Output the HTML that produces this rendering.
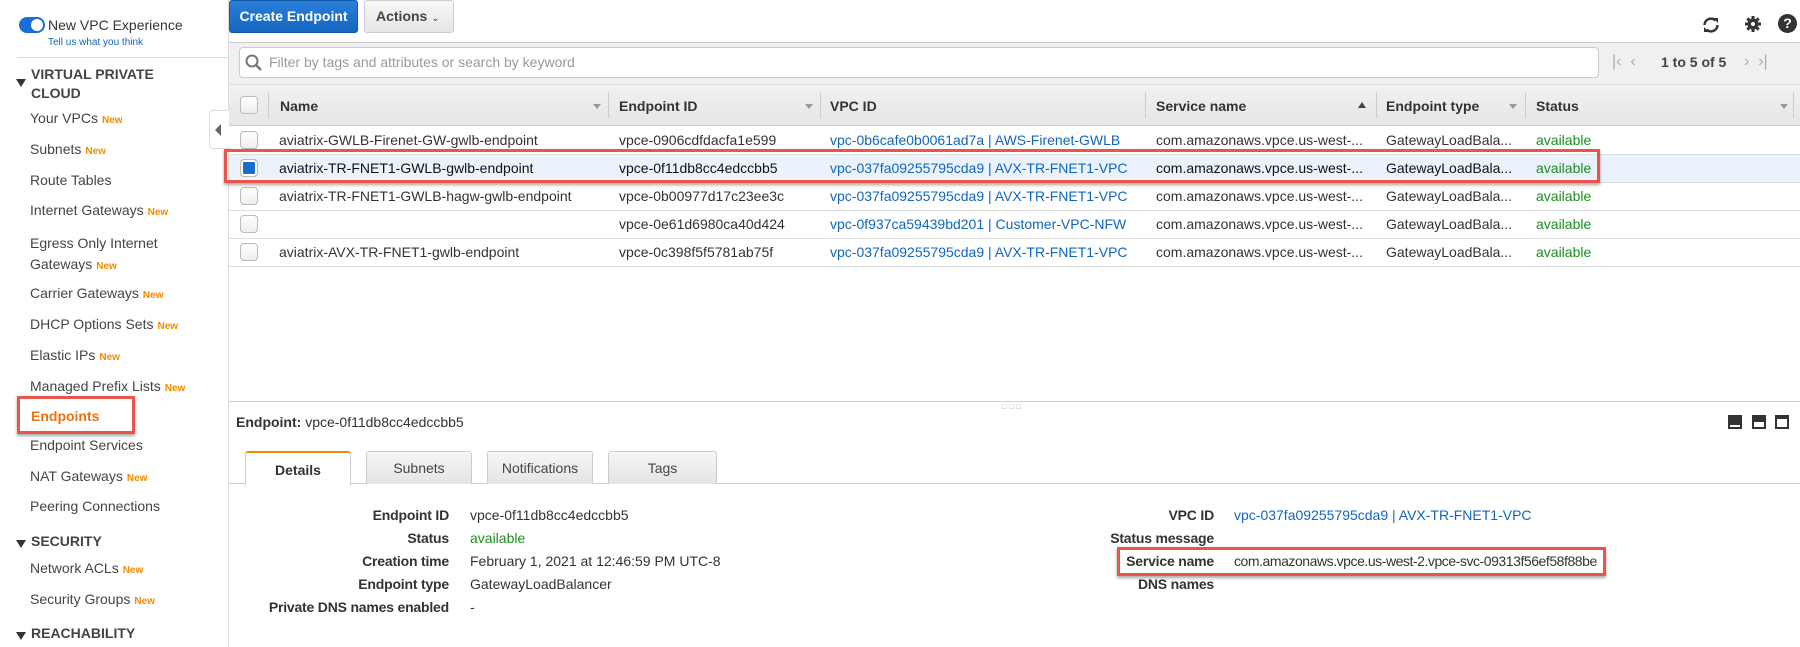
<!DOCTYPE html>
<html><head><meta charset="utf-8"><style>
*{box-sizing:border-box;margin:0;padding:0}
body{width:1800px;height:647px;overflow:hidden;background:#fff;font-family:"Liberation Sans",Arial,sans-serif;font-size:14px;color:#333;position:relative}
.a{position:absolute;white-space:nowrap}
.new{color:#f08c00;font-size:10px;font-weight:bold;margin-left:4px}
.side{color:#444;font-size:14px}
.sec{font-weight:bold;color:#444;font-size:14px}
.tri{display:inline-block;width:0;height:0;border-left:5px solid transparent;border-right:5px solid transparent;border-top:8px solid #333}
.th{font-weight:bold;color:#333;font-size:14px}
.dv{position:absolute;top:92px;width:1px;height:26px;background:#ccc}
.dd{position:absolute;top:104px;width:0;height:0;border-left:4px solid transparent;border-right:4px solid transparent;border-top:5px solid #999}
.cb{position:absolute;width:18px;height:18px;border:1px solid #bbb;border-radius:4px;background:linear-gradient(#fff,#eee)}
.rl{position:absolute;left:229px;width:1571px;height:1px;background:#ddd}
.link{color:#1166bb}
.grn{color:#1d8f1d}
.tab{position:absolute;top:451px;height:33px;border:1px solid #ccc;border-bottom:none;background:linear-gradient(#f6f6f6,#e4e4e4);text-align:center;line-height:32px;font-size:14px;color:#444;border-radius:3px 3px 0 0}
.lb{font-weight:bold;text-align:right;color:#333;letter-spacing:-0.2px}
.red{position:absolute;border:3px solid #e9554a;box-shadow:0 2px 3px rgba(0,0,0,.35)}
</style></head><body>

<!-- sidebar -->
<div class="a" style="left:19px;top:17px;width:26px;height:16px;border-radius:8px;background:#1a6fd4"></div>
<div class="a" style="left:31px;top:19px;width:12px;height:12px;border-radius:6px;background:#fff"></div>
<div class="a" style="left:48px;top:17px;font-size:14px;color:#333">New VPC Experience</div>
<div class="a" style="left:48px;top:37px;font-size:10px;color:#1166bb">Tell us what you think</div>
<div class="a" style="left:17px;top:57px;width:212px;height:1px;background:#ddd"></div>
<div class="a" style="left:16px;top:74px"><span class="tri"></span></div>
<div class="a sec" style="left:31px;top:65px;line-height:19px">VIRTUAL PRIVATE<br>CLOUD</div>
<div class="a side" style="left:30px;top:110px">Your VPCs<span class="new">New</span></div>
<div class="a side" style="left:30px;top:141px">Subnets<span class="new">New</span></div>
<div class="a side" style="left:30px;top:172px">Route Tables</div>
<div class="a side" style="left:30px;top:202px">Internet Gateways<span class="new">New</span></div>
<div class="a side" style="left:30px;top:233px;line-height:21px">Egress Only Internet<br>Gateways<span class="new">New</span></div>
<div class="a side" style="left:30px;top:285px">Carrier Gateways<span class="new">New</span></div>
<div class="a side" style="left:30px;top:316px">DHCP Options Sets<span class="new">New</span></div>
<div class="a side" style="left:30px;top:347px">Elastic IPs<span class="new">New</span></div>
<div class="a side" style="left:30px;top:378px">Managed Prefix Lists<span class="new">New</span></div>
<div class="red" style="left:17px;top:396px;width:118px;height:38px"></div>
<div class="a" style="left:31px;top:408px;font-weight:bold;color:#ec7211;font-size:14px">Endpoints</div>
<div class="a side" style="left:30px;top:437px">Endpoint Services</div>
<div class="a side" style="left:30px;top:468px">NAT Gateways<span class="new">New</span></div>
<div class="a side" style="left:30px;top:498px">Peering Connections</div>
<div class="a" style="left:16px;top:535px"><span class="tri"></span></div>
<div class="a sec" style="left:31px;top:533px">SECURITY</div>
<div class="a side" style="left:30px;top:560px">Network ACLs<span class="new">New</span></div>
<div class="a side" style="left:30px;top:591px">Security Groups<span class="new">New</span></div>
<div class="a" style="left:16px;top:627px"><span class="tri"></span></div>
<div class="a sec" style="left:31px;top:625px">REACHABILITY</div>
<div class="a" style="left:228px;top:0;width:1px;height:647px;background:#ddd"></div>
<div class="a" style="left:209px;top:110px;width:21px;height:39px;border:1px solid #ddd;border-right:none;background:#fff;border-radius:4px 0 0 4px"></div>
<div class="a" style="left:215px;top:124px;width:0;height:0;border-top:6px solid transparent;border-bottom:6px solid transparent;border-right:6px solid #666"></div>

<!-- top buttons -->
<div class="a" style="left:229px;top:0;width:129px;height:33px;border-radius:3px;background:linear-gradient(#2b7fd8,#1466c0);border:1px solid #115aa8;color:#fff;font-weight:bold;font-size:14px;text-align:center;line-height:31px">Create Endpoint</div>
<div class="a" style="left:364px;top:0;width:90px;height:33px;border-radius:3px;background:linear-gradient(#f7f7f7,#e6e6e6);border:1px solid #ccc;color:#444;font-weight:bold;font-size:14px;line-height:31px;padding-left:11px">Actions <span style="font-size:10px;font-weight:normal">&#8964;</span></div>
<svg class="a" style="left:1700px;top:14px" width="22" height="22" viewBox="0 0 22 22"><path d="M4.5 11a6.5 6.5 0 0 1 11-4.5" stroke="#333" stroke-width="2.4" fill="none"/><path d="M17.5 11a6.5 6.5 0 0 1-11 4.5" stroke="#333" stroke-width="2.4" fill="none"/><path d="M13 4h5v5z" fill="#333"/><path d="M9 18H4v-5z" fill="#333"/></svg>
<svg class="a" style="left:1744px;top:15px" width="18" height="18" viewBox="0 0 18 18"><circle cx="9" cy="9" r="5.5" fill="#333"/><g stroke="#333" stroke-width="3"><path d="M9 1v16M1 9h16M3.3 3.3l11.4 11.4M14.7 3.3L3.3 14.7"/></g><circle cx="9" cy="9" r="2" fill="#fff"/></svg>
<div class="a" style="left:1778px;top:14px;width:19px;height:19px;border-radius:10px;background:#333;color:#fff;font-weight:bold;font-size:14px;text-align:center;line-height:19px">?</div>

<!-- toolbar -->
<div class="a" style="left:229px;top:42px;width:1571px;height:42px;background:#f0f0f0;border-top:1px solid #ccc"></div>
<div class="a" style="left:239px;top:47px;width:1360px;height:31px;background:#fff;border:1px solid #ccc;border-radius:4px"></div>
<svg class="a" style="left:245px;top:54px" width="18" height="18" viewBox="0 0 18 18"><circle cx="7" cy="7" r="5.5" stroke="#777" stroke-width="2" fill="none"/><path d="M11 11l5 5" stroke="#777" stroke-width="2.5"/></svg>
<div class="a" style="left:269px;top:54px;color:#999;font-size:14px">Filter by tags and attributes or search by keyword</div>
<div class="a" style="left:1612px;top:53px;color:#aaa;font-size:16px">|&lsaquo;&nbsp;&nbsp;&lsaquo;</div>
<div class="a" style="left:1661px;top:54px;font-weight:bold;color:#444;font-size:14px">1 to 5 of 5</div>
<div class="a" style="left:1744px;top:53px;color:#aaa;font-size:16px">&rsaquo;&nbsp;&nbsp;&rsaquo;|</div>

<!-- header -->
<div class="a" style="left:229px;top:84px;width:1571px;height:42px;background:linear-gradient(#f1f1f1,#e6e6e6);border-top:1px solid #ddd;border-bottom:1px solid #ccc"></div>
<div class="cb" style="left:240px;top:96px"></div>
<div class="dv" style="left:268px"></div>
<div class="a th" style="left:280px;top:98px">Name</div>
<div class="dd" style="left:593px"></div><div class="dv" style="left:608px"></div>
<div class="a th" style="left:619px;top:98px">Endpoint ID</div>
<div class="dd" style="left:805px"></div><div class="dv" style="left:820px"></div>
<div class="a th" style="left:830px;top:98px">VPC ID</div>
<div class="dv" style="left:1145px"></div>
<div class="a th" style="left:1156px;top:98px">Service name</div>
<div class="a" style="left:1358px;top:102px;width:0;height:0;border-left:4px solid transparent;border-right:4px solid transparent;border-bottom:6px solid #444"></div>
<div class="dv" style="left:1376px"></div>
<div class="a th" style="left:1386px;top:98px">Endpoint type</div>
<div class="dd" style="left:1509px"></div><div class="dv" style="left:1525px"></div>
<div class="a th" style="left:1536px;top:98px">Status</div>
<div class="dd" style="left:1780px"></div><div class="dv" style="left:1793px"></div>

<!-- rows -->
<div class="a" style="left:229px;top:154px;width:1571px;height:28px;background:#eaf2fc"></div>
<div class="rl" style="top:154px"></div><div class="rl" style="top:182px"></div><div class="rl" style="top:210px"></div><div class="rl" style="top:238px"></div><div class="rl" style="top:266px"></div>

<div class="cb" style="left:240px;top:131px"></div>
<div class="a" style="left:279px;top:132px">aviatrix-GWLB-Firenet-GW-gwlb-endpoint</div>
<div class="a" style="left:619px;top:132px">vpce-0906cdfdacfa1e599</div>
<div class="a link" style="left:830px;top:132px">vpc-0b6cafe0b0061ad7a | AWS-Firenet-GWLB</div>
<div class="a" style="left:1156px;top:132px">com.amazonaws.vpce.us-west-...</div>
<div class="a" style="left:1386px;top:132px">GatewayLoadBala...</div>
<div class="a grn" style="left:1536px;top:132px">available</div>

<div class="cb" style="left:240px;top:159px;background:#1d6bc9;border-color:#bbb;box-shadow:inset 0 0 0 2px #fff"></div>
<div class="a" style="left:279px;top:160px;color:#111">aviatrix-TR-FNET1-GWLB-gwlb-endpoint</div>
<div class="a" style="left:619px;top:160px;color:#111">vpce-0f11db8cc4edccbb5</div>
<div class="a link" style="left:830px;top:160px">vpc-037fa09255795cda9 | AVX-TR-FNET1-VPC</div>
<div class="a" style="left:1156px;top:160px;color:#111">com.amazonaws.vpce.us-west-...</div>
<div class="a" style="left:1386px;top:160px;color:#111">GatewayLoadBala...</div>
<div class="a grn" style="left:1536px;top:160px">available</div>

<div class="cb" style="left:240px;top:187px"></div>
<div class="a" style="left:279px;top:188px">aviatrix-TR-FNET1-GWLB-hagw-gwlb-endpoint</div>
<div class="a" style="left:619px;top:188px">vpce-0b00977d17c23ee3c</div>
<div class="a link" style="left:830px;top:188px">vpc-037fa09255795cda9 | AVX-TR-FNET1-VPC</div>
<div class="a" style="left:1156px;top:188px">com.amazonaws.vpce.us-west-...</div>
<div class="a" style="left:1386px;top:188px">GatewayLoadBala...</div>
<div class="a grn" style="left:1536px;top:188px">available</div>

<div class="cb" style="left:240px;top:215px"></div>
<div class="a" style="left:619px;top:216px">vpce-0e61d6980ca40d424</div>
<div class="a link" style="left:830px;top:216px">vpc-0f937ca59439bd201 | Customer-VPC-NFW</div>
<div class="a" style="left:1156px;top:216px">com.amazonaws.vpce.us-west-...</div>
<div class="a" style="left:1386px;top:216px">GatewayLoadBala...</div>
<div class="a grn" style="left:1536px;top:216px">available</div>

<div class="cb" style="left:240px;top:243px"></div>
<div class="a" style="left:279px;top:244px">aviatrix-AVX-TR-FNET1-gwlb-endpoint</div>
<div class="a" style="left:619px;top:244px">vpce-0c398f5f5781ab75f</div>
<div class="a link" style="left:830px;top:244px">vpc-037fa09255795cda9 | AVX-TR-FNET1-VPC</div>
<div class="a" style="left:1156px;top:244px">com.amazonaws.vpce.us-west-...</div>
<div class="a" style="left:1386px;top:244px">GatewayLoadBala...</div>
<div class="a grn" style="left:1536px;top:244px">available</div>

<div class="red" style="left:224px;top:149px;width:1376px;height:34px"></div>

<!-- bottom panel -->
<div class="a" style="left:229px;top:401px;width:1571px;height:1px;background:#ccc"></div>
<div class="a" style="left:1002px;top:404px;font-size:7px;color:#999;letter-spacing:3px">&#9633;&#9633;&#9633;</div>
<div class="a" style="left:236px;top:414px;font-size:14px"><b>Endpoint:</b> vpce-0f11db8cc4edccbb5</div>
<div class="a" style="left:1728px;top:415px;width:14px;height:14px;background:#333"><div style="position:absolute;left:2px;right:2px;bottom:2px;height:2px;background:#fff"></div></div>
<div class="a" style="left:1752px;top:415px;width:14px;height:14px;background:#333"><div style="position:absolute;left:2px;right:2px;bottom:2px;height:5px;background:#fff"></div></div>
<div class="a" style="left:1775px;top:415px;width:14px;height:14px;background:#333"><div style="position:absolute;left:2px;right:2px;bottom:2px;height:8px;background:#fff"></div></div>

<div class="a" style="left:229px;top:483px;width:1571px;height:1px;background:#ccc"></div>
<div class="tab" style="left:245px;width:106px;background:#fff;height:34px;border-top:2px solid #f08c00;font-weight:bold;color:#333;line-height:34px">Details</div>
<div class="tab" style="left:366px;width:106px">Subnets</div>
<div class="tab" style="left:487px;width:106px">Notifications</div>
<div class="tab" style="left:608px;width:109px">Tags</div>

<div class="a lb" style="left:200px;width:249px;top:507px">Endpoint ID</div>
<div class="a lb" style="left:200px;width:249px;top:530px">Status</div>
<div class="a lb" style="left:200px;width:249px;top:553px">Creation time</div>
<div class="a lb" style="left:200px;width:249px;top:576px">Endpoint type</div>
<div class="a lb" style="left:200px;width:249px;top:599px">Private DNS names enabled</div>
<div class="a" style="left:470px;top:507px">vpce-0f11db8cc4edccbb5</div>
<div class="a grn" style="left:470px;top:530px">available</div>
<div class="a" style="left:470px;top:553px">February 1, 2021 at 12:46:59 PM UTC-8</div>
<div class="a" style="left:470px;top:576px">GatewayLoadBalancer</div>
<div class="a" style="left:470px;top:599px">-</div>

<div class="a lb" style="left:1000px;width:214px;top:507px">VPC ID</div>
<div class="a lb" style="left:1000px;width:214px;top:530px">Status message</div>
<div class="a lb" style="left:1000px;width:214px;top:553px">Service name</div>
<div class="a lb" style="left:1000px;width:214px;top:576px">DNS names</div>
<div class="a link" style="left:1234px;top:507px">vpc-037fa09255795cda9 | AVX-TR-FNET1-VPC</div>
<div class="a" style="left:1234px;top:553px;letter-spacing:-0.45px">com.amazonaws.vpce.us-west-2.vpce-svc-09313f56ef58f88be</div>
<div class="red" style="left:1117px;top:547px;width:489px;height:29px"></div>
</body></html>
